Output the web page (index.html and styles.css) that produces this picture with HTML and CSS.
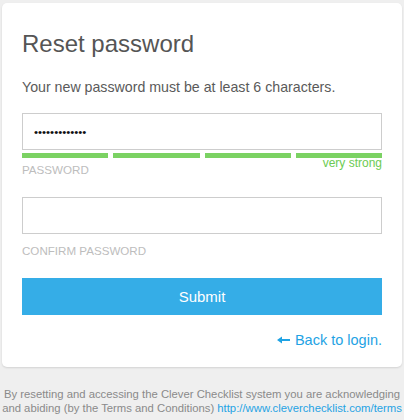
FILE: index.html
```html
<!DOCTYPE html>
<html lang="en">
<head>
<meta charset="utf-8">
<title>Reset password</title>
<link rel="stylesheet" href="styles.css">
</head>
<body>
<div class="page">
  <div class="card">
    <h1 class="title">Reset password</h1>
    <p class="desc">Your new password must be at least 6 characters.</p>
    <input class="field" type="password" value="abcdefghijklm">
    <div class="strength">
      <span class="bar"></span><span class="bar"></span><span class="bar"></span><span class="bar"></span>
    </div>
    <div class="label-row">
      <span class="label">PASSWORD</span>
      <span class="strength-text">very strong</span>
    </div>
    <input class="field field-confirm" type="password" value="">
    <div class="label label-confirm">CONFIRM PASSWORD</div>
    <button class="submit" type="button">Submit</button>
    <div class="back-row">
      <a class="back" href="#"><svg class="arrow" width="13" height="8" viewBox="0 0 13 8"><path d="M0 4 L5 0.5 L5 3 L13 3 L13 5 L5 5 L5 7.5 Z" fill="currentColor"/></svg>Back to login.</a>
    </div>
  </div>
  <p class="footer">By resetting and accessing the Clever Checklist system you are acknowledging<br>and abiding (by the Terms and Conditions) <a class="footer-link" href="#">http://www.cleverchecklist.com/terms</a></p>
</div>
</body>
</html>
```

FILE: styles.css
```css
html, body {
  margin: 0;
  padding: 0;
  background: #efefef;
  font-family: "Liberation Sans", Arial, sans-serif;
}

.page {
  padding: 3px 2px 0;
}

.card {
  background: #fff;
  border-radius: 5px;
  box-shadow: 0 1px 2px rgba(0, 0, 0, 0.12);
  padding: 26px 20px 18px;
  display: flex;
  flex-direction: column;
}

.title {
  margin: 0;
  font-size: 24px;
  line-height: 29px;
  font-weight: normal;
  color: #555;
}

.desc {
  margin: 20px 0 0;
  font-size: 14.2px;
  line-height: 18px;
  color: #5a5a5a;
}

.field {
  margin: 17px 0 0;
  box-sizing: border-box;
  width: 100%;
  height: 37px;
  border: 1px solid #cdcdcd;
  border-radius: 0;
  padding: 0 11px;
  font-family: "Liberation Sans", Arial, sans-serif;
  font-size: 11.5px;
  color: #111;
  background: #fff;
  outline: none;
}

.strength {
  margin-top: 3px;
  display: flex;
  gap: 5px;
}

.bar {
  flex: 1;
  height: 5px;
  background: #7bd263;
}

.label-row {
  display: flex;
  justify-content: space-between;
  align-items: flex-start;
}

.label {
  padding-top: 5px;
  font-size: 11.6px;
  line-height: 14px;
  color: #bdbdbd;
}

.strength-text {
  font-size: 12px;
  line-height: 11px;
  color: #6ccb52;
}

.field-confirm {
  margin-top: 20px;
}

.label-confirm {
  padding-top: 0;
  margin-top: 10px;
}

.submit {
  margin-top: 20px;
  height: 37px;
  border: 0;
  padding: 0;
  background: #35ade7;
  color: #fff;
  font-family: "Liberation Sans", Arial, sans-serif;
  font-size: 15px;
  line-height: 37px;
}

.back-row {
  margin-top: 16px;
  display: flex;
  justify-content: flex-end;
}

.back {
  display: flex;
  align-items: center;
  font-size: 14.5px;
  line-height: 18px;
  color: #1fa3e4;
  text-decoration: none;
}

.arrow {
  margin-right: 5px;
}

.footer {
  margin: 20px 0 0;
  text-align: center;
  font-size: 11.3px;
  line-height: 14px;
  color: #8a8a8a;
  white-space: nowrap;
}

.footer-link {
  color: #1fa3e4;
  text-decoration: none;
}
```
